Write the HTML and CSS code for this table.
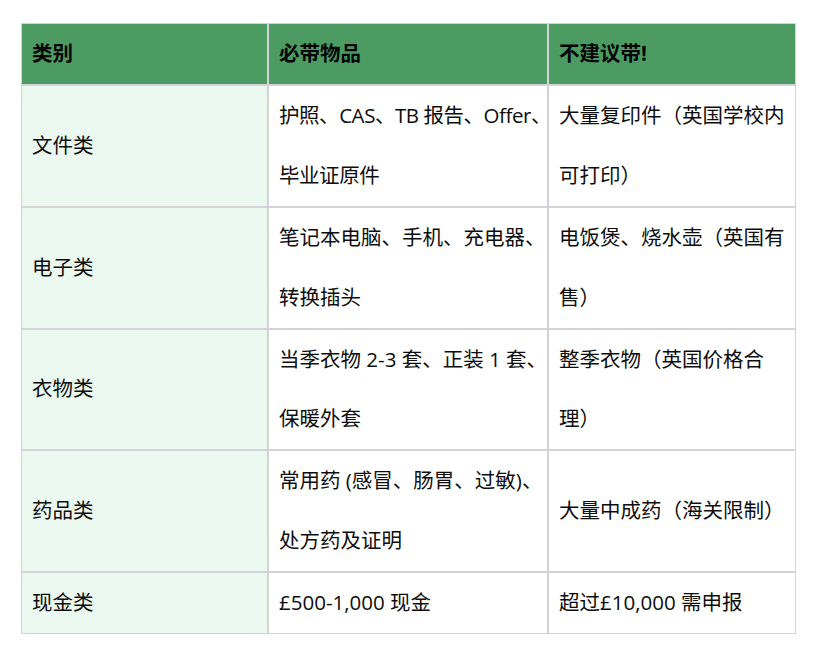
FILE: index.html
```html
<!DOCTYPE html>
<html lang="zh-CN">
<head>
<meta charset="utf-8">
<title>留学行李清单</title>
<link rel="stylesheet" href="styles.css">
</head>
<body>
<table class="pack-table">
  <thead>
    <tr>
      <th class="col-cat">类别</th>
      <th class="col-must">必带物品</th>
      <th class="col-no">不建议带!</th>
    </tr>
  </thead>
  <tbody>
    <tr>
      <td class="cat">文件类</td>
      <td class="tight">护照、CAS、TB 报告、Offer、<br>毕业证原件</td>
      <td>大量复印件（英国学校内<br>可打印）</td>
    </tr>
    <tr>
      <td class="cat">电子类</td>
      <td>笔记本电脑、手机、充电器、<br>转换插头</td>
      <td>电饭煲、烧水壶（英国有<br>售）</td>
    </tr>
    <tr>
      <td class="cat">衣物类</td>
      <td>当季衣物 2-3 套、正装 1 套、<br>保暖外套</td>
      <td>整季衣物（英国价格合<br>理）</td>
    </tr>
    <tr>
      <td class="cat">药品类</td>
      <td>常用药 (感冒、肠胃、过敏)、<br>处方药及证明</td>
      <td>大量中成药（海关限制）</td>
    </tr>
    <tr>
      <td class="cat">现金类</td>
      <td>£500-1,000 现金</td>
      <td>超过£10,000 需申报</td>
    </tr>
  </tbody>
</table>
</body>
</html>
```

FILE: styles.css
```css
html, body {
  margin: 0;
  padding: 0;
  background: #ffffff;
}

body {
  padding: 23px 0 0 21px;
  font-family: "Open Sans", "Noto Sans CJK SC", sans-serif;
  font-size: 20.5px;
  color: #0d0d0d;
}

.pack-table {
  width: 775px;
  table-layout: fixed;
  border-collapse: separate;
  border-spacing: 0;
}

.pack-table th,
.pack-table td {
  box-sizing: border-box;
  border: 1px solid #d2d3d8;
  padding: 0 0 0 10px;
  line-height: 59.9px;
  text-align: left;
  vertical-align: middle;
  font-weight: 400;
  white-space: nowrap;
}

.pack-table th {
  background: #4b9b63;
  color: #050505;
  font-weight: 700;
}

.col-cat { width: 247px; }
.col-must { width: 280px; }
.col-no { width: 248px; }

.pack-table td.cat {
  background: #ebf8ef;
}

.pack-table td.tight {
  letter-spacing: -0.45px;
}
```
